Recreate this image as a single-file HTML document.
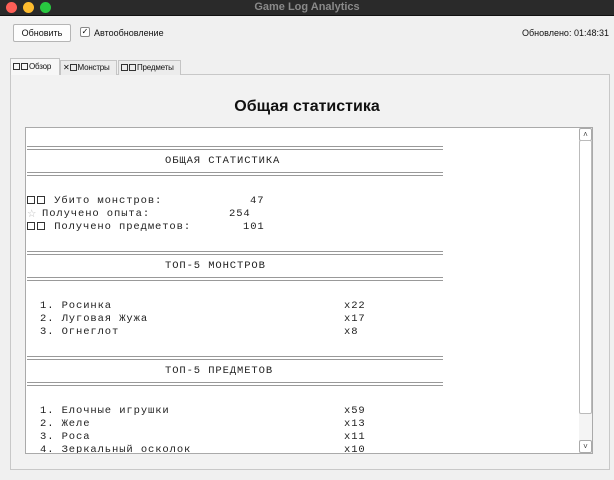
<!DOCTYPE html>
<html><head><meta charset="utf-8"><style>
*{margin:0;padding:0;box-sizing:border-box}
body{width:614px;height:480px;overflow:hidden;background:#f0f0f0;font-family:"Liberation Sans","DejaVu Sans",sans-serif;position:relative}
.tb{position:absolute;left:0;top:0;width:614px;height:16px;background:#2a2a2a;border-bottom:1px solid #111}
.dot{position:absolute;top:2px;width:11px;height:11px;border-radius:50%}
.tt{position:absolute;left:0;width:614px;top:1px;text-align:center;color:#8a8a8a;font-size:11px;font-weight:bold}
.btn{position:absolute;left:13px;top:24px;width:58px;height:18px;background:#fdfdfd;border:1px solid #b5b5b5;border-radius:2px;font-size:9px;text-align:center;line-height:16px;color:#111}
.sm{position:absolute;font-size:9px;color:#111}
.cb{position:absolute;left:80px;top:27px;width:10px;height:10px;border:1px solid #888;border-radius:2px;background:#fff;font-size:8px;line-height:8px;text-align:center}
.tab{position:absolute;top:60px;height:15px;border:1px solid #c4c4c4;border-bottom:none;background:#ececec;font-size:8px;letter-spacing:-0.2px;line-height:13px;padding-left:2px;color:#111;white-space:nowrap;overflow:hidden}
.tab .sq{width:7px;height:7px;margin-right:1px;vertical-align:-1px}
.pane{position:absolute;left:10px;top:74px;width:600px;height:396px;border:1px solid #c8c8c8;background:#f2f2f2}
h1{position:absolute;left:0;width:614px;top:98px;text-align:center;font-size:16px;font-weight:bold;color:#111}
.ta{position:absolute;left:25px;top:127px;width:568px;height:327px;background:#fff;border:1px solid #aaa;overflow:hidden}
.l{position:absolute;font-family:"Liberation Mono","DejaVu Sans Mono",monospace;font-size:10.5px;letter-spacing:0.9px;color:#222;white-space:pre;line-height:13px}
.eq{position:absolute;left:1px;width:416px;height:4px;border-top:1px solid #999;border-bottom:1px solid #999}
.sq{display:inline-block;width:8px;height:8px;border:1px solid #333;margin-right:2px;vertical-align:-1px}
.sb{position:absolute;left:579px;top:128px;width:13px;height:325px;background:#f4f4f4}
.sbb{position:absolute;left:0;width:13px;height:13px;border:1px solid #aaa;background:#fff;border-radius:2px;font-size:8px;text-align:center;line-height:11px;color:#444}
</style></head><body>
<div class="tb"><div class="dot" style="left:6px;background:#fe5f57"></div><div class="dot" style="left:23px;background:#febc2e"></div><div class="dot" style="left:40px;background:#28c840"></div><div class="tt">Game Log Analytics</div></div>
<div class="btn">Обновить</div>
<div class="cb">✓</div><div class="sm" style="left:94px;top:28px">Автообновление</div>
<div class="sm" style="left:522px;top:28px">Обновлено: 01:48:31</div>
<div class="pane"></div>
<div class="tab" style="left:10px;width:50px;background:#f7f7f7;top:58px;height:17px;line-height:15px"><span class="sq"></span><span class="sq"></span>Обзор</div>
<div class="tab" style="left:60px;width:57px">✕<span class="sq"></span>Монстры</div>
<div class="tab" style="left:118px;width:63px"><span class="sq"></span><span class="sq"></span>Предметы</div>
<h1>Общая статистика</h1>
<div class="ta">
<div class="eq" style="top:18px"></div>
<div class="l" style="left:139px;top:27px">ОБЩАЯ СТАТИСТИКА</div>
<div class="eq" style="top:44px"></div>
<div class="l" style="left:1px;top:67px"><span class="sq"></span><span class="sq"></span> Убито монстров:</div>
<div class="l" style="left:224px;top:67px">47</div>
<div class="l" style="left:1px;top:80px;color:#bbb;font-family:'DejaVu Sans',sans-serif">☆</div>
<div class="l" style="left:16px;top:80px">Получено опыта:</div>
<div class="l" style="left:203px;top:80px">254</div>
<div class="l" style="left:1px;top:93px"><span class="sq"></span><span class="sq"></span> Получено предметов:</div>
<div class="l" style="left:217px;top:93px">101</div>
<div class="eq" style="top:123px"></div>
<div class="l" style="left:139px;top:132px">ТОП-5 МОНСТРОВ</div>
<div class="eq" style="top:149px"></div>
<div class="l" style="left:14px;top:172px">1. Росинка</div><div class="l" style="left:318px;top:172px">x22</div>
<div class="l" style="left:14px;top:185px">2. Луговая Жужа</div><div class="l" style="left:318px;top:185px">x17</div>
<div class="l" style="left:14px;top:198px">3. Огнеглот</div><div class="l" style="left:318px;top:198px">x8</div>
<div class="eq" style="top:228px"></div>
<div class="l" style="left:139px;top:237px">ТОП-5 ПРЕДМЕТОВ</div>
<div class="eq" style="top:254px"></div>
<div class="l" style="left:14px;top:277px">1. Елочные игрушки</div><div class="l" style="left:318px;top:277px">x59</div>
<div class="l" style="left:14px;top:290px">2. Желе</div><div class="l" style="left:318px;top:290px">x13</div>
<div class="l" style="left:14px;top:303px">3. Роса</div><div class="l" style="left:318px;top:303px">x11</div>
<div class="l" style="left:14px;top:316px">4. Зеркальный осколок</div><div class="l" style="left:318px;top:316px">x10</div>
</div>
<div class="sb">
<div class="sbb" style="top:0">˄</div>
<div style="position:absolute;left:0;top:12px;width:13px;height:274px;border:1px solid #bbb;background:#fff;border-radius:2px"></div>
<div class="sbb" style="top:312px">˅</div>
</div>
</body></html>
